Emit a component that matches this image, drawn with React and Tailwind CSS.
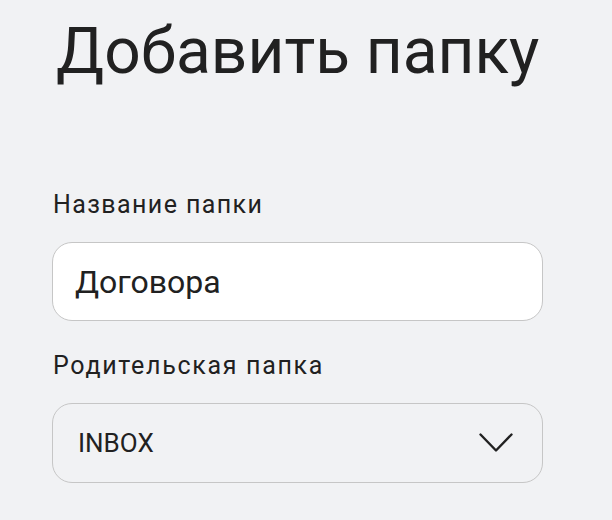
import React from 'react'

const Chevron = () => (
  <svg width="34" height="20" viewBox="0 0 34 20" fill="none" className="shrink-0">
    <path d="M1.5 1.5 L17 17.5 L32.5 1.5" stroke="#212121" strokeWidth="2.4" strokeLinecap="round" strokeLinejoin="round" />
  </svg>
)

const App = () => {
  return (
    <div className="min-h-screen bg-[#f1f2f4] pl-[52px] font-['Roboto',sans-serif] text-[#212121]">
      <h1 className="pl-[4px] pt-[14px] text-[64px] leading-[76px] font-normal">Добавить папку</h1>

      <div className="w-[491px]">
        <label className="mt-[100px] block pl-px text-[25px] leading-[30px] tracking-[1.4px]">Название папки</label>
        <div className="mt-[22px] flex h-[79px] items-center rounded-[20px] border-[1.5px] border-[#c6c6c6] bg-white px-[22px]">
          <span className="text-[32px]">Договора</span>
        </div>

        <label className="mt-[30px] block pl-px text-[25px] leading-[30px] tracking-[1.7px]">Родительская папка</label>
        <div className="mt-[22px] flex h-[80px] items-center justify-between rounded-[20px] border-[1.5px] border-[#c6c6c6] pl-[25px] pr-[29px]">
          <span className="text-[26px]">INBOX</span>
          <Chevron />
        </div>
      </div>
    </div>
  )
}

export default App
